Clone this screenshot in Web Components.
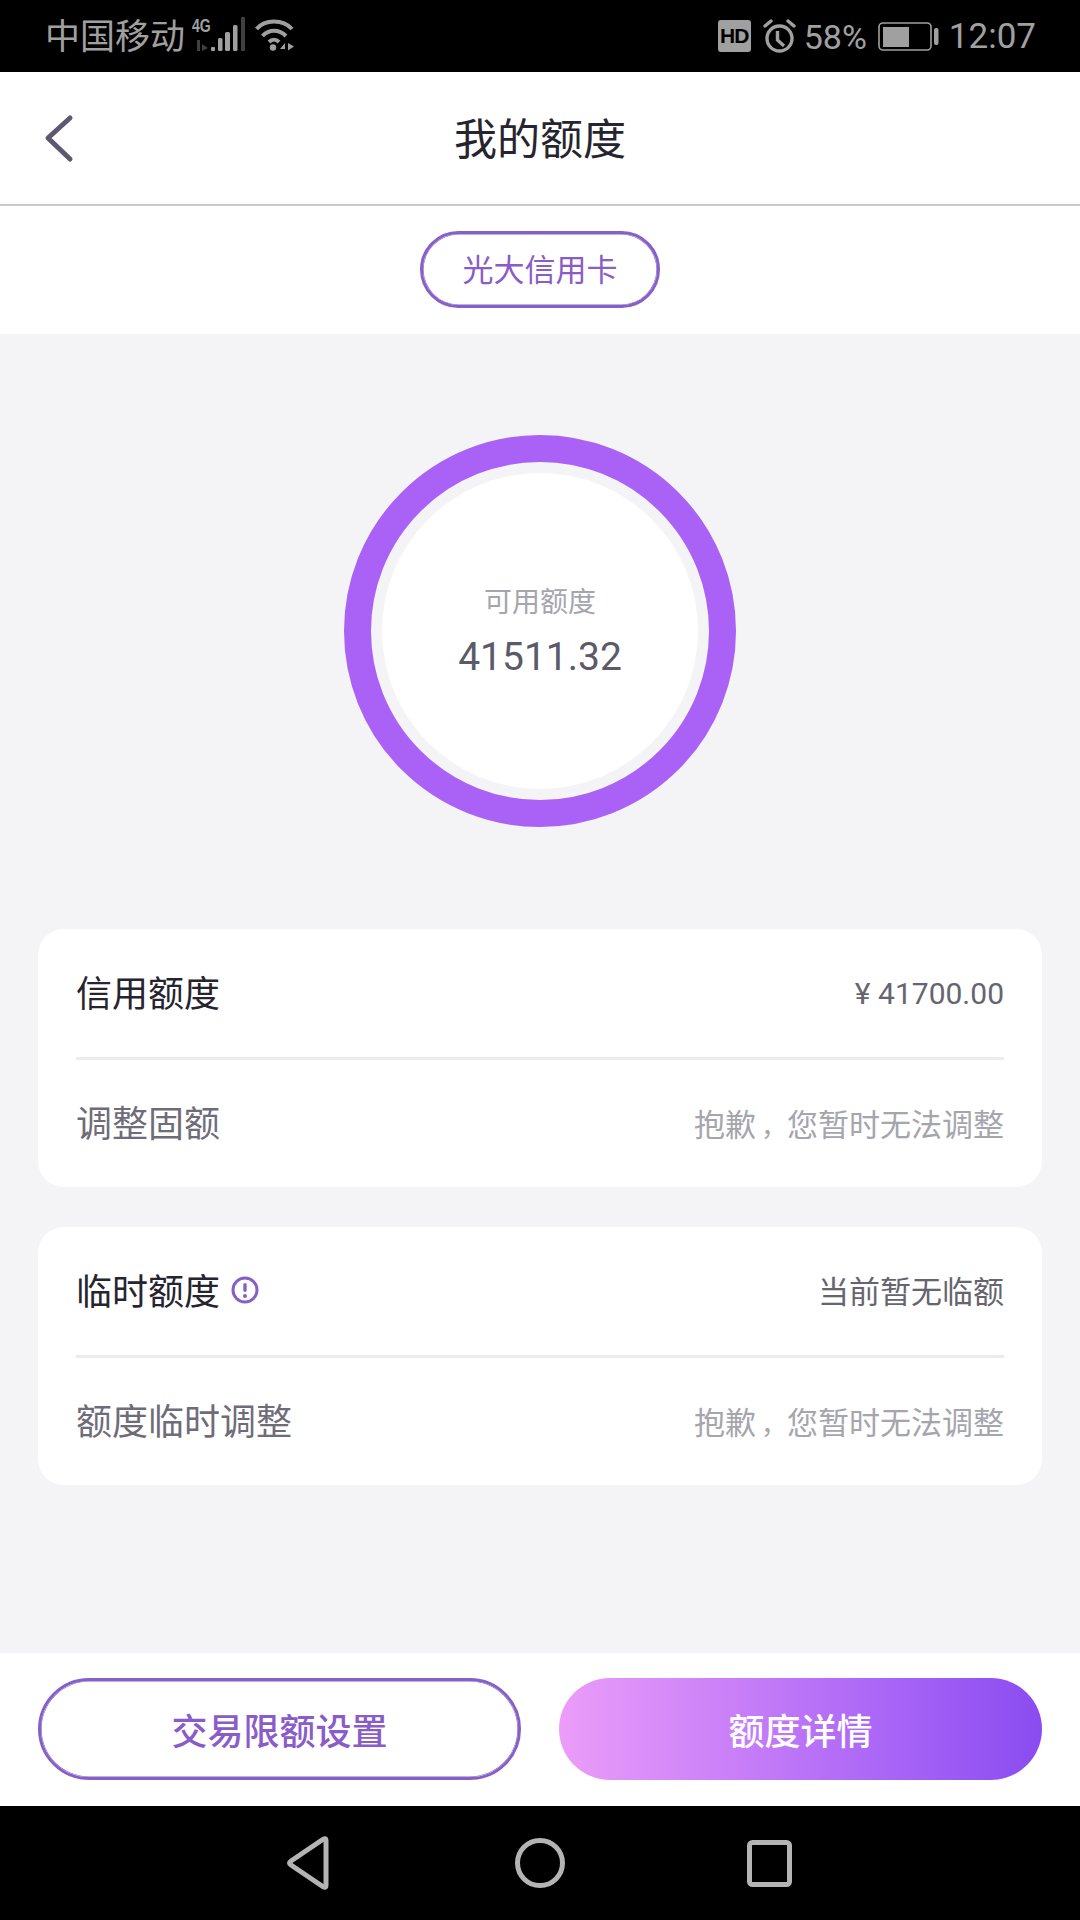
<!DOCTYPE html>
<html lang="zh-CN">
<head>
<meta charset="utf-8">
<title>我的额度</title>
<style>
  html, body { margin: 0; padding: 0; background: #f4f4f7; }
  body {
    width: 1080px; height: 1920px; overflow: hidden;
    display: flex; flex-direction: column;
    font-family: Roboto, "Noto Sans CJK SC", sans-serif;
  }
  credit-page { flex: 1; }
</style>
</head>
<body>
<status-bar></status-bar>
<top-nav>我的额度</top-nav>
<card-tab>光大信用卡</card-tab>
<credit-page>
  <limit-ring label="可用额度" value="41511.32"></limit-ring>
  <limit-card>
    <limit-row slot="top" strong amount value="¥ 41700.00">信用额度</limit-row>
    <limit-row slot="bottom" muted value="抱歉，您暂时无法调整">调整固额</limit-row>
  </limit-card>
  <limit-card>
    <limit-row slot="top" strong info value="当前暂无临额">临时额度</limit-row>
    <limit-row slot="bottom" muted value="抱歉，您暂时无法调整">额度临时调整</limit-row>
  </limit-card>
</credit-page>
<action-bar>
  <action-button>交易限额设置</action-button>
  <action-button primary>额度详情</action-button>
</action-bar>
<key-bar></key-bar>

<script>
class StatusBar extends HTMLElement {
  constructor() {
    super();
    this.attachShadow({mode: "open"}).innerHTML = `
      <style>
        :host { display: flex; align-items: center; height: 72px; background: #000; color: #a0a0a0;
                padding: 0 44px 0 45px; box-sizing: border-box; flex: none; }
        .carrier { font-size: 35px; line-height: 72px; margin-right: 7px; padding-top: 3px; }
        .sp { flex: 1; }
        .right { display: flex; align-items: center; }
        .num { font-size: 34px; line-height: 72px; padding-top: 2px; }
        .time { font-size: 35px; }
        svg { display: block; flex: none; }
        .net { position: relative; width: 55px; height: 34px; margin: 0 8px 4px 0; }
        .net span { position: absolute; left: 0; top: 0; font: 700 18px/18px "Liberation Sans", sans-serif;
                    transform: scaleX(.78); transform-origin: 0 0; }
        .hd { width: 33px; height: 32px; border-radius: 3px; background: #a0a0a0; color: #000; display: flex;
              align-items: center; justify-content: center; font: 700 21px/32px "Liberation Sans", sans-serif;
              letter-spacing: -1px; margin-right: 12px; }
      </style>
      <span class="carrier">中国移动</span>
      <div class="net">
        <span>4G</span>
        <svg width="55" height="34" viewBox="0 0 55 34" fill="#a0a0a0">
          <path d="M5 23h3v11H5zM10 27l6 4-6 3z" opacity=".4"/>
          <rect x="19" y="30" width="4" height="4" rx="1"/>
          <rect x="26" y="21" width="4.500" height="13" rx="1.500"/>
          <rect x="33" y="15" width="5" height="19" rx="1.500"/>
          <rect x="41" y="8" width="4.500" height="26" rx="1.500"/>
          <rect x="49" y="0" width="4" height="34" rx="1" opacity=".4"/>
        </svg>
      </div>
      <svg width="40" height="34" viewBox="0 0 40 34" fill="none" stroke="#a0a0a0" stroke-width="4" style="margin-bottom:3px">
        <path d="M1.500 11C10 1 28 1 37 11"/>
        <path d="M7.500 18C14 11 24 11 31 18"/>
        <path d="M14 24C17 21 21 21 24 24"/>
        <circle cx="18" cy="29.500" r="3.200" fill="#a0a0a0" stroke="none"/>
        <path d="M25 31l5-6v6zM33 25l6 3.500-6 4z" fill="#a0a0a0" stroke="none"/>
      </svg>
      <div class="sp"></div>
      <div class="right">
        <div class="hd">HD</div>
        <svg width="33" height="34" viewBox="0 0 33 34" fill="none" stroke="#a0a0a0" stroke-width="3.400" style="margin-right:8px">
          <circle cx="16.500" cy="19.500" r="12.500"/>
          <path d="M14.500 12v9l6.500 6"/>
          <path d="M2 7l6-5M31 7l-6-5" stroke-linecap="round"/>
        </svg>
        <span class="num" style="margin-right:11px">58%</span>
        <svg width="61" height="30" viewBox="0 0 61 30" fill="none" style="margin-right:10px">
          <rect x="1" y="2" width="52" height="27" rx="4" stroke="#a0a0a0" stroke-width="1.600"/>
          <rect x="5" y="6" width="26" height="20" fill="#a0a0a0"/>
          <rect x="56" y="7" width="4.500" height="17" rx="2" fill="#a0a0a0"/>
        </svg>
        <span class="num time">12:07</span>
      </div>`;
  }
}
customElements.define("status-bar", StatusBar);

class TopNav extends HTMLElement {
  constructor() {
    super();
    this.attachShadow({mode: "open"}).innerHTML = `
      <style>
        :host { display: grid; grid-template-columns: 1fr auto 1fr; align-items: center; height: 134px; flex: none;
                box-sizing: border-box; background: #fff; border-bottom: 2px solid #c9c9cd; color: #26242e;
                font-size: 43px; }
        svg { display: block; margin-left: 44px; }
        .title { padding-bottom: 5px; }
      </style>
      <svg width="30" height="50" viewBox="0 0 30 50" fill="none" stroke="#5d5870" stroke-width="5" stroke-linecap="round" stroke-linejoin="round">
        <path d="M26 5L4 25L26 46"/>
      </svg>
      <span class="title"><slot></slot></span>
      <span></span>`;
  }
}
customElements.define("top-nav", TopNav);

class CardTab extends HTMLElement {
  constructor() {
    super();
    this.attachShadow({mode: "open"}).innerHTML = `
      <style>
        :host { display: flex; justify-content: center; align-items: center; height: 128px; background: #fff; flex: none; }
        div { width: 240px; height: 77px; margin-bottom: 2px; box-sizing: border-box; border: 3px solid #8660c7; border-radius: 39px;
              box-shadow: inset 0 0 0 .6px #8660c7;
              display: flex; align-items: center; justify-content: center; color: #8a5cc9; font-size: 31px; padding-bottom: 3px; }
      </style>
      <div><slot></slot></div>`;
  }
}
customElements.define("card-tab", CardTab);

class CreditPage extends HTMLElement {
  constructor() {
    super();
    this.attachShadow({mode: "open"}).innerHTML = `
      <style>
        :host { display: flex; flex-direction: column; align-items: stretch; gap: 40px; padding: 101px 38px 0;
                background: #f4f4f7; box-sizing: border-box; min-height: 0; }
      </style>
      <slot></slot>`;
  }
}
customElements.define("credit-page", CreditPage);

class LimitRing extends HTMLElement {
  constructor() {
    super();
    this.attachShadow({mode: "open"}).innerHTML = `
      <style>
        :host { display: grid; width: 392px; height: 392px; justify-self: center; align-self: center; margin-bottom: 62px; }
        svg, .txt { grid-area: 1 / 1; }
        svg { display: block; }
        .txt { display: flex; flex-direction: column; align-items: center; padding-top: 150px; box-sizing: border-box; }
        .label { font-size: 28px; line-height: 36px; color: #a5a5ad; }
        .value { font-size: 39px; line-height: 46px; color: #5c5a68; margin-top: 13px; }
      </style>
      <svg width="392" height="392" viewBox="0 0 392 392">
        <circle cx="196" cy="196" r="158" fill="#fff"/>
        <circle cx="196" cy="196" r="182.500" fill="none" stroke="#a962f5" stroke-width="27"/>
      </svg>
      <div class="txt">
        <span class="label">${this.getAttribute("label")}</span>
        <span class="value">${this.getAttribute("value")}</span>
      </div>`;
  }
}
customElements.define("limit-ring", LimitRing);

class LimitCard extends HTMLElement {
  constructor() {
    super();
    this.attachShadow({mode: "open"}).innerHTML = `
      <style>
        :host { display: flex; flex-direction: column; background: #fff; border-radius: 26px; padding: 0 38px; }
        hr { border: 0; height: 3px; margin: 0; background: #ececf0; }
      </style>
      <slot name="top"></slot>
      <hr>
      <slot name="bottom"></slot>`;
  }
}
customElements.define("limit-card", LimitCard);

class LimitRow extends HTMLElement {
  constructor() {
    super();
    const strong = this.hasAttribute("strong");
    const amount = this.hasAttribute("amount");
    // comma sits further right in its cell in the reference, smaller size + padding keeps the cell 31px
    const value = this.getAttribute("value").replace("，", '<span class="comma">，</span>');
    this.attachShadow({mode: "open"}).innerHTML = `
      <style>
        :host { display: flex; align-items: center; height: ${strong ? 128 : 127}px; }
        .name { font-size: 36px; color: ${strong ? "#26242e" : "#6f6c7a"}; padding-bottom: ${strong ? 4 : 5}px; }
        .val { margin-left: auto; font-size: ${amount ? 30 : 31}px; color: ${strong ? "#66646f" : "#a5a5ad"};
               padding-bottom: ${amount ? 0 : 3}px; }
        .comma { font-size: 26px; padding-left: 5px; }
        svg { display: block; margin: 0 0 3px 11px; }
      </style>
      <span class="name"><slot></slot></span>
      ${this.hasAttribute("info") ? `
      <svg width="28" height="28" viewBox="0 0 28 28">
        <circle cx="14" cy="14" r="12" fill="none" stroke="#8660c7" stroke-width="3"/>
        <rect x="12.300" y="7" width="3.400" height="9" rx="1.700" fill="#8660c7"/>
        <circle cx="14" cy="20" r="2" fill="#8660c7"/>
      </svg>` : ""}
      <span class="val">${value}</span>`;
  }
}
customElements.define("limit-row", LimitRow);

class ActionBar extends HTMLElement {
  constructor() {
    super();
    this.attachShadow({mode: "open"}).innerHTML = `
      <style>
        :host { display: grid; grid-template-columns: 1fr 1fr; gap: 38px; padding: 25px 38px 26px; height: 153px; box-sizing: border-box; background: #fff; flex: none; }
      </style>
      <slot></slot>`;
  }
}
customElements.define("action-bar", ActionBar);

class ActionButton extends HTMLElement {
  constructor() {
    super();
    const primary = this.hasAttribute("primary");
    this.attachShadow({mode: "open"}).innerHTML = `
      <style>
        :host { display: flex; align-items: center; justify-content: center; height: 102px; box-sizing: border-box;
                border-radius: 51px; font-size: 36px; font-weight: 500;
                ${primary
                  ? "background: linear-gradient(90deg, #ec9df9 0%, #a965f6 68%, #8a4cf0 100%); color: #fff;"
                  : "border: 3px solid #8660c7; box-shadow: inset 0 0 0 .6px #8660c7; background: #fff; color: #8a5cc9;"} }
      </style>
      <slot></slot>`;
  }
}
customElements.define("action-button", ActionButton);

class KeyBar extends HTMLElement {
  constructor() {
    super();
    this.attachShadow({mode: "open"}).innerHTML = `
      <style>
        :host { display: block; height: 114px; background: #000; flex: none; }
        svg { display: block; }
      </style>
      <svg width="1080" height="114" viewBox="0 0 1080 114" fill="none" stroke="#b4b4b4" stroke-width="5" stroke-linejoin="round">
        <path d="M326 35L326 79Q326 83 322 80L291 59Q288 57 291 55L322 34Q326 31 326 35Z"/>
        <circle cx="540" cy="57" r="22.500"/>
        <rect x="749.500" y="36.500" width="40" height="42" rx="3"/>
      </svg>`;
  }
}
customElements.define("key-bar", KeyBar);
</script>
</body>
</html>
